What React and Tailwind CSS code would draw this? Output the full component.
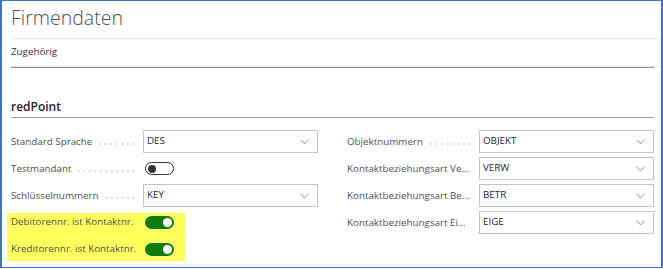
import React from 'react';

const font = { fontFamily: '"Open Sans", "Noto Sans", sans-serif' };

function Dots() {
  return (
    <span className="flex-1 h-[4px] mt-[3px] mr-[7px] ml-[4px] bg-[radial-gradient(circle,#bdbdbd_0.55px,transparent_0.85px)] bg-[length:5.5px_4px] bg-repeat-x bg-right" />
  );
}

function Label({ text }) {
  return (
    <div className="w-[132px] flex items-center overflow-hidden">
      <span className="whitespace-nowrap text-[9.8px] text-[#505050]">{text}</span>
      <Dots />
    </div>
  );
}

function Select({ value }) {
  return (
    <div className="w-[175px] h-[23px] border border-[#c4c4c4] bg-white flex items-center justify-between pl-[3px] pr-[8px]">
      <span className="text-[9.8px] text-[#1f1f1f]">{value}</span>
      <svg width="9" height="6" viewBox="0 0 9 6" fill="none">
        <polyline points="0.5,0.8 4.5,4.8 8.5,0.8" stroke="#7a7a7a" strokeWidth="0.9" />
      </svg>
    </div>
  );
}

function Toggle({ on }) {
  if (on) {
    return (
      <div className="ml-[2px] w-[29px] h-[13px] rounded-full bg-[#107c10] flex items-center justify-end pr-[2px]">
        <span className="w-[9px] h-[9px] rounded-full bg-white" />
      </div>
    );
  }
  return (
    <div className="ml-[2px] w-[29px] h-[13px] rounded-full border-[1.5px] border-[#333] bg-white flex items-center pl-[1.5px]">
      <span className="w-[8px] h-[8px] rounded-full bg-[#333]" />
    </div>
  );
}

function Row({ label, children }) {
  return (
    <div className="flex h-[27px] pt-[2px]">
      <Label text={label} />
      <div className="w-[175px] flex items-center h-[23px]">{children}</div>
    </div>
  );
}

export default function App() {
  return (
    <div style={font} className="w-[663px] h-[268px] bg-white border-[#3f74c8] border-l-2 border-r-2 border-t border-b overflow-hidden">
      <div className="pl-[9px]">
        <div className="h-[38px] border-b border-[#e6e6e6] flex items-center pb-[4px]">
          <h1 className="text-[19.5px] font-light text-[#505050] leading-none">Firmendaten</h1>
        </div>
        <div className="h-[28px] border-b border-[#e6e6e6] flex items-center">
          <span className="text-[9.8px] text-[#333]">Zugehörig</span>
        </div>
        <div className="mr-[7px] h-px bg-[#8e939b]" />
        <div className="mr-[7px] h-[50px] border-b border-[#9aa0a8] flex items-end pb-[2px]">
          <h2 className="text-[12px] font-semibold text-[#262626] leading-[16px]">redPoint</h2>
        </div>

        <div className="mt-[10px] flex gap-[29px]">
          <div className="flex flex-col">
            <Row label="Standard Sprache">
              <Select value="DES" />
            </Row>
            <Row label="Testmandant">
              <Toggle on={false} />
            </Row>
            <Row label="Schlüsselnummern">
              <Select value="KEY" />
            </Row>
            <div className="mt-[4px] -ml-[4px] pl-[4px] w-[178px] h-[48px] bg-[#ffff5e] flex flex-col">
              <div className="flex h-[19px] items-center">
                <Label text="Debitorennr. ist Kontaktnr." />
                <Toggle on />
              </div>
              <div className="flex h-[19px] mt-[8px] items-center">
                <Label text="Kreditorennr. ist Kontaktnr." />
                <Toggle on />
              </div>
            </div>
          </div>

          <div className="flex flex-col">
            <Row label="Objektnummern">
              <Select value="OBJEKT" />
            </Row>
            <Row label="Kontaktbeziehungsart Ve...">
              <Select value="VERW" />
            </Row>
            <Row label="Kontaktbeziehungsart Be...">
              <Select value="BETR" />
            </Row>
            <Row label="Kontaktbeziehungsart Ei...">
              <Select value="EIGE" />
            </Row>
          </div>
        </div>
      </div>
    </div>
  );
}
